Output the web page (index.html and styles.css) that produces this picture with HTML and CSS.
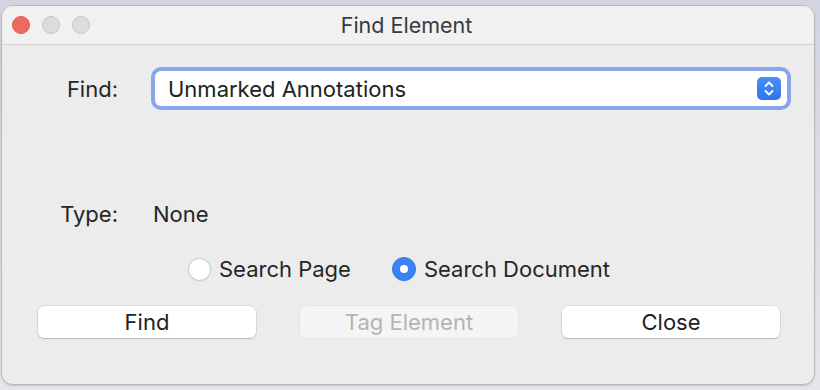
FILE: index.html
```html
<!DOCTYPE html>
<html>
<head>
<meta charset="utf-8">
<link rel="stylesheet" href="styles.css">
</head>
<body>
<div class="window">
  <div class="titlebar">
    <div class="lights">
      <span class="light close"></span>
      <span class="light"></span>
      <span class="light"></span>
    </div>
    <div class="title">Find Element</div>
  </div>
  <div class="content">
    <div class="row find-row">
      <div class="label">Find:</div>
      <div class="select">
        <span class="select-text">Unmarked Annotations</span>
        <span class="stepper">
          <svg width="24" height="23" viewBox="0 0 24 23">
            <path d="M8.5 9 L12 5.5 L15.5 9" fill="none" stroke="#fff" stroke-width="1.8" stroke-linecap="round" stroke-linejoin="round"/>
            <path d="M8.5 14 L12 17.5 L15.5 14" fill="none" stroke="#fff" stroke-width="1.8" stroke-linecap="round" stroke-linejoin="round"/>
          </svg>
        </span>
      </div>
    </div>
    <div class="row type-row">
      <div class="label">Type:</div>
      <div class="value">None</div>
    </div>
    <div class="radios">
      <label class="radio"><span class="dot"></span>Search Page</label>
      <label class="radio"><span class="dot on"></span>Search Document</label>
    </div>
    <div class="buttons">
      <button class="btn">Find</button>
      <button class="btn disabled">Tag Element</button>
      <button class="btn">Close</button>
    </div>
  </div>
</div>
</body>
</html>
```
FILE: styles.css
```css
html, body {
  margin: 0;
  padding: 0;
}
body {
  width: 820px;
  height: 390px;
  background: linear-gradient(#d3d4e2, #e6e6ea);
  font-family: Inter, "Noto Sans", "Liberation Sans", sans-serif;
  color: #262626;
  overflow: hidden;
}
.window {
  margin: 5px 0 0 1px;
  width: 814px;
  height: 380px;
  box-sizing: border-box;
  border-radius: 12px;
  background: #ececec;
  border: 1px solid #b9b9bd;
  box-shadow: 0 1px 2px rgba(0,0,0,0.15);
  overflow: hidden;
  display: flex;
  flex-direction: column;
}
.titlebar {
  height: 38px;
  background: #f0f1f0;
  border-bottom: 1px solid #d2d2d2;
  display: flex;
  align-items: center;
  justify-content: center;
  position: relative;
}
.lights {
  position: absolute;
  left: 10px;
  top: 10px;
  display: flex;
  gap: 12px;
}
.light {
  width: 18px;
  height: 18px;
  border-radius: 50%;
  box-sizing: border-box;
  background: #dcdcdc;
  border: 1px solid #c5c5c5;
}
.light.close {
  background: #ee6a5e;
  border-color: #df5a4e;
}
.title {
  font-size: 21.5px;
  color: #3a3a3a;
  line-height: 24px;
  margin-left: -3px;
}
.content {
  padding: 26px 0 0 0;
  display: flex;
  flex-direction: column;
}
.row {
  display: flex;
  align-items: center;
}
.label {
  width: 116px;
  text-align: right;
  font-size: 22px;
  line-height: 24px;
  flex: none;
}
.find-row .label {
  margin-right: 37px;
}
.select {
  width: 632px;
  height: 35px;
  box-sizing: border-box;
  background: #fff;
  border-radius: 6px;
  box-shadow: 0 0 0 4px #88a6ea;
  display: flex;
  align-items: center;
  justify-content: space-between;
  padding: 0 6px 0 13px;
}
.select-text {
  font-size: 22px;
  line-height: 24px;
  color: #222;
}
.stepper {
  width: 24px;
  height: 23px;
  border-radius: 5px;
  background: linear-gradient(#4a8ef8, #2f74f0);
  display: block;
}
.stepper svg {
  display: block;
}
.type-row {
  margin-top: 96px;
  height: 24px;
}
.value {
  margin-left: 35px;
  font-size: 22px;
  line-height: 24px;
}
.radios {
  margin-top: 31px;
  display: flex;
  align-items: center;
  padding-left: 186px;
  gap: 41px;
  height: 24px;
}
.radio {
  display: flex;
  align-items: center;
  font-size: 22px;
  line-height: 24px;
  gap: 8px;
}
.dot {
  width: 23px;
  height: 23px;
  box-sizing: border-box;
  border-radius: 50%;
  background: #fff;
  border: 1px solid #c9c9c9;
  box-shadow: 0 0.5px 1px rgba(0,0,0,0.08);
  display: flex;
  align-items: center;
  justify-content: center;
}
.dot.on {
  width: 24px;
  height: 24px;
  background: #3a82f6;
  border-color: #3478f0;
}
.dot.on::after {
  content: "";
  width: 8px;
  height: 8px;
  border-radius: 50%;
  background: #fff;
}
.buttons {
  margin-top: 25px;
  display: flex;
  gap: 44px;
  padding-left: 36px;
}
.btn {
  width: 218px;
  height: 32px;
  border: none;
  border-radius: 6px;
  background: #fff;
  font-family: inherit;
  font-size: 22px;
  line-height: 24px;
  color: #222;
  box-shadow: 0 0 0 0.5px rgba(0,0,0,0.12), 0 1px 1.5px rgba(0,0,0,0.18);
  padding: 0;
}
.btn.disabled {
  background: #f4f5f4;
  color: #b4b4b4;
  box-shadow: 0 0 0 0.5px rgba(0,0,0,0.06);
}
```
